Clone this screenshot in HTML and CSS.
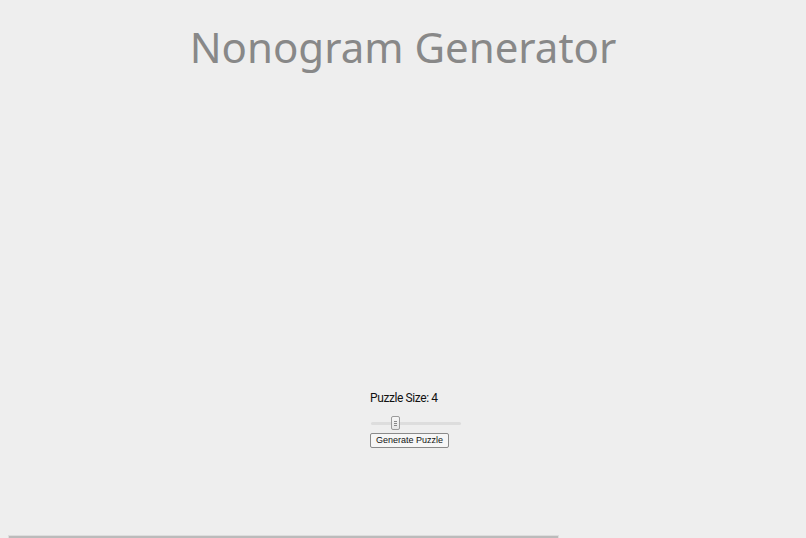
FILE: index.html
```html
<!DOCTYPE html>
<html lang="en">
<head>
  <meta charset="UTF-8">
  <meta name="viewport" content="width=device-width, initial-scale=1.0">
  <title>Nonogram Generator</title>
  <link rel="stylesheet" href="styles.css">
</head>
<body>

  <h1 class="title">Nonogram Generator</h1>

  <div class="puzzle" id="puzzle"></div>

  <!-- Controls -->
  <div class="controls">
    <label class="size-label" for="size">Puzzle Size: <span id="sizeValue">4</span></label>
    <input type="range" class="size-slider" id="size" min="1" max="13" value="4">
    <button class="generate" id="generate">Generate Puzzle</button>
  </div>

  <!-- Solution board -->
  <div class="board"></div>

</body>
</html>
```

FILE: styles.css
```css
/* General Styles */
body {
  margin: 0;
  background-color: #eeeeee;
  font-family: Roboto, Arial, sans-serif;
  overflow: hidden;
  height: 538px;
}

.title {
  margin: 0;
  padding-top: 18px;
  text-align: center;
  font-family: "Noto Sans", "Open Sans", sans-serif;
  font-weight: 400;
  font-size: 42px;
  color: #888888;
}

.puzzle {
  height: 316px;
}

/* Controls */
.controls {
  display: flex;
  flex-direction: column;
  align-items: flex-start;
  padding-left: 370px;
}

.size-label {
  font-size: 12px;
  letter-spacing: -0.4px;
  color: #111111;
}

.size-slider {
  -webkit-appearance: none;
  appearance: none;
  width: 90px;
  height: 14px;
  margin: 11px 0 3px 1px;
  background: transparent;
}

.size-slider::-webkit-slider-runnable-track {
  height: 3px;
  background: #dddddd;
  border-radius: 2px;
}

/* Thumb with three small grip lines */
.size-slider::-webkit-slider-thumb {
  -webkit-appearance: none;
  width: 9px;
  height: 14px;
  margin-top: -6px;
  background:
    linear-gradient(#888888, #888888) center 4px / 3px 1px no-repeat,
    linear-gradient(#888888, #888888) center 6px / 3px 1px no-repeat,
    linear-gradient(#888888, #888888) center 8px / 3px 1px no-repeat,
    linear-gradient(#f6f6f6, #e6e6e6);
  border: 1px solid #9a9a9a;
  border-radius: 2px;
}

.generate {
  font-family: Arial, sans-serif;
  font-size: 9px;
  line-height: 11px;
  padding: 1px 5px;
  background: #f6f6f6;
  border: 1px solid #8a8a8a;
  border-radius: 2px;
  color: #111111;
}

/* Board */
.board {
  position: absolute;
  left: 8px;
  top: 535px;
  width: 549px;
  height: 40px;
  border: 1px solid #dddddd;
  background: #bbbbbb;
}
```
